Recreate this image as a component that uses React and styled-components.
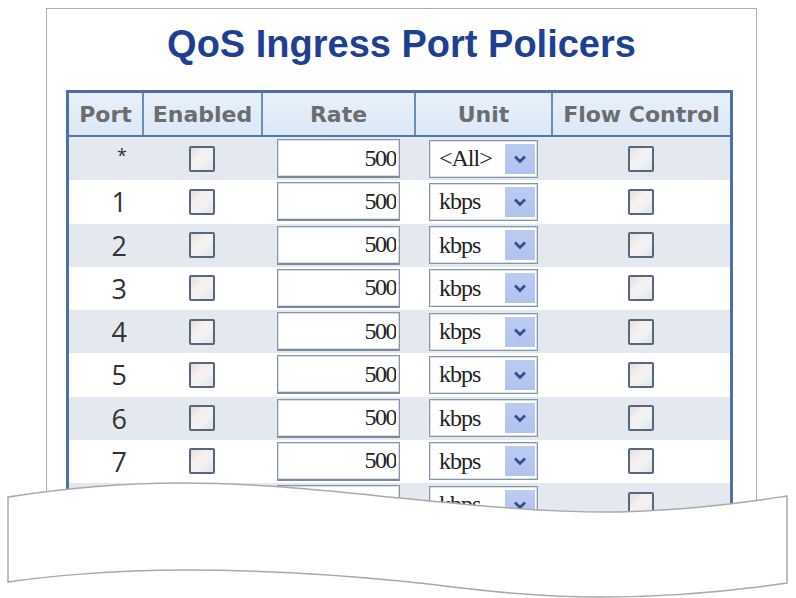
import React from 'react';
import styled, { createGlobalStyle } from 'styled-components';

const GlobalStyle = createGlobalStyle`
  html, body {
    margin: 0;
    padding: 0;
    background: #fff;
  }
  body {
    font-family: "Liberation Sans", Arial, sans-serif;
  }
`;

const Page = styled.div`
  position: relative;
  width: 796px;
  height: 598px;
  overflow: hidden;
  box-sizing: border-box;
  padding: 8px 0 0 46px;
`;

const Frame = styled.div`
  width: 711px;
  height: 532px;
  box-sizing: border-box;
  border: 1px solid #a7afb8;
  border-bottom: none;
  overflow: hidden;
  padding-top: 13px;
`;

const Title = styled.h1`
  margin: 0;
  text-align: center;
  font-family: "Liberation Sans", Arial, sans-serif;
  font-weight: bold;
  font-size: 38px;
  line-height: 44px;
  color: #1f3f93;
`;

const Table = styled.div`
  width: 667px;
  margin: 24px 0 0 19px;
  box-sizing: border-box;
  border: 3px solid #4d70a6;
  border-bottom: none;
`;

const Row = styled.div`
  display: grid;
  grid-template-columns: 73px 119px 153px 137px 179px;
  height: 43.25px;
  background: ${(p) => (p.$shade ? '#e4e9f0' : '#ffffff')};
`;

const HeadRow = styled(Row)`
  height: 44px;
  box-sizing: border-box;
  background: linear-gradient(#e8f1fb, #dbe8f7);
  border-bottom: 2px solid #5577ab;
`;

const HeadCell = styled.div`
  display: flex;
  align-items: center;
  justify-content: center;
  font-family: "DejaVu Sans", Verdana, sans-serif;
  font-weight: bold;
  font-size: 22px;
  color: #6b6d70;
  white-space: nowrap;
  border-left: ${(p) => (p.$first ? 'none' : '2px solid #6f8dbb')};
`;

const Cell = styled.div`
  display: flex;
  align-items: center;
  justify-content: ${(p) => p.$justify || 'center'};
  padding-left: ${(p) => p.$padLeft || 0}px;
  padding-right: ${(p) => p.$padRight || 0}px;
`;

const PortLabel = styled.span`
  font-family: "Open Sans", "DejaVu Sans", sans-serif;
  font-size: ${(p) => (p.$star ? 18 : 27)}px;
  color: #333;
  line-height: 1;
  margin-bottom: ${(p) => (p.$star ? 8 : 0)}px;
`;

const Check = styled.input.attrs({ type: 'checkbox' })`
  appearance: none;
  margin: 0;
  width: 26px;
  height: 26px;
  box-sizing: border-box;
  border: 2px solid #58677b;
  border-radius: 2px;
  background: linear-gradient(135deg, #dcdfe4 0%, #f7efec 35%, #f2f3f5 60%, #dfe3e8 100%);
`;

const RateInput = styled.input.attrs({ type: 'text' })`
  width: 123px;
  height: 39px;
  box-sizing: border-box;
  margin: 0;
  border: 1px solid #8797ab;
  border-bottom: 2px solid #7a8aa0;
  box-shadow: inset 0 0 0 1px #d7dee7;
  padding: 0 3px 0 0;
  text-align: right;
  font-family: "Liberation Serif", "Times New Roman", serif;
  font-size: 24px;
  letter-spacing: -1.5px;
  color: #222;
  background: #fff;
  outline: none;
`;

const SelectBox = styled.div`
  width: 109px;
  height: 38px;
  box-sizing: border-box;
  display: flex;
  align-items: center;
  padding-left: 9px;
  border: 1px solid #8797ab;
  box-shadow: inset 0 0 0 1px #d7dee7;
  background: #fff;
  font-family: "Liberation Serif", "Times New Roman", serif;
  font-size: 24px;
  letter-spacing: -1px;
  color: #222;
`;

const ArrowButton = styled.span`
  margin-left: auto;
  margin-right: 2px;
  width: 30px;
  height: 30px;
  display: flex;
  align-items: center;
  justify-content: center;
  background: linear-gradient(#bccbf1, #b1c3ee);
`;

const Wave = styled.svg`
  position: absolute;
  left: 0;
  top: 0;
  pointer-events: none;
`;

const Chevron = () => (
  <svg width="14" height="10" viewBox="0 0 14 10">
    <polyline points="2,2.5 7,7.5 12,2.5" fill="none" stroke="#34508f" strokeWidth="2.8" />
  </svg>
);

const ports = ['*', 1, 2, 3, 4, 5, 6, 7, 8];

const App = () => (
  <>
    <GlobalStyle />
    <Page>
      <Frame>
        <Title>QoS Ingress Port Policers</Title>
        <Table>
          <HeadRow>
            <HeadCell $first>Port</HeadCell>
            <HeadCell>Enabled</HeadCell>
            <HeadCell>Rate</HeadCell>
            <HeadCell>Unit</HeadCell>
            <HeadCell>Flow Control</HeadCell>
          </HeadRow>
          {ports.map((port, i) => (
            <Row key={port} $shade={i % 2 === 0}>
              <Cell $justify="flex-end" $padRight={15}>
                <PortLabel $star={port === '*'}>{port}</PortLabel>
              </Cell>
              <Cell>
                <Check />
              </Cell>
              <Cell $justify="flex-start" $padLeft={16}>
                <RateInput defaultValue="500" />
              </Cell>
              <Cell $justify="flex-start" $padLeft={15}>
                <SelectBox>
                  {port === '*' ? '<All>' : 'kbps'}
                  <ArrowButton>
                    <Chevron />
                  </ArrowButton>
                </SelectBox>
              </Cell>
              <Cell>
                <Check />
              </Cell>
            </Row>
          ))}
        </Table>
      </Frame>
      <Wave width="796" height="598" viewBox="0 0 796 598">
        <path
          d="M8,497 C60,489 120,483 180,483 C260,483 330,491 400,498 C480,506 550,513 620,512 C700,510 760,500 787,496 L787,583 C740,590 680,597 600,597 C520,597 460,587 400,581 C330,574 260,570 185,570 C110,570 40,577 8,582 Z"
          fill="#ffffff"
          stroke="#a9a9a9"
          strokeWidth="1.5"
        />
      </Wave>
    </Page>
  </>
);

export default App;
